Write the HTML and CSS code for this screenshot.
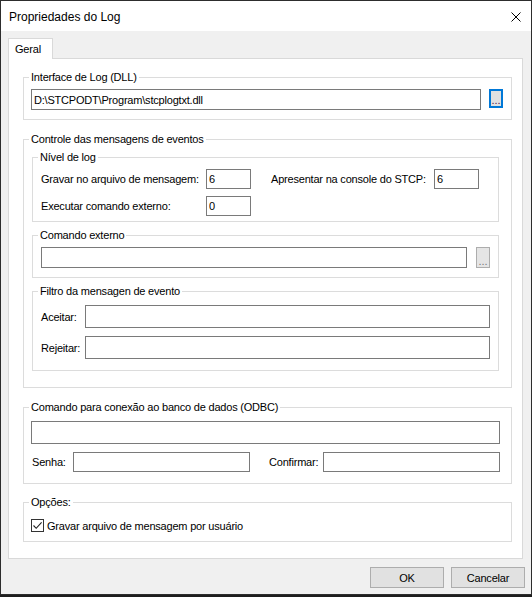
FILE: index.html
```html
<!DOCTYPE html>
<html lang="pt">
<head>
<meta charset="utf-8">
<title>Propriedades do Log</title>
<link rel="stylesheet" href="styles.css">
</head>
<body>
<div class="window">
  <div class="titlebar">
    <span class="title">Propriedades do Log</span>
    <svg class="close" width="10" height="10" viewBox="0 0 10 10"><path d="M0.5 0.5 L9.5 9.5 M9.5 0.5 L0.5 9.5" stroke="#000" stroke-width="1" fill="none"/></svg>
  </div>
  <div class="client">
    <div class="tabs"><div class="tab">Geral</div></div>
    <div class="panel">
      <fieldset class="group outer">
        <legend>Interface de Log (DLL)</legend>
        <div class="body-dll">
          <input class="field w-dll" type="text" value="D:\STCPODT\Program\stcplogtxt.dll">
          <button class="dots focused">...</button>
        </div>
      </fieldset>

      <fieldset class="group outer gap12">
        <legend>Controle das mensagens de eventos</legend>
        <div class="body-ctrl">
          <fieldset class="group inner">
            <legend>Nível de log</legend>
            <div class="body-nivel">
              <div class="row">
                <span class="lbl w165">Gravar no arquivo de mensagem:</span>
                <input class="field small" type="text" value="6">
                <span class="lbl w163 ml20">Apresentar na console do STCP:</span>
                <input class="field small" type="text" value="6">
              </div>
              <div class="row">
                <span class="lbl w165">Executar comando externo:</span>
                <input class="field small" type="text" value="0">
              </div>
            </div>
          </fieldset>

          <fieldset class="group inner gap6">
            <legend>Comando externo</legend>
            <div class="body-cmd">
              <input class="field w-cmd" type="text" value="">
              <button class="dots disabled">...</button>
            </div>
          </fieldset>

          <fieldset class="group inner gap6">
            <legend>Filtro da mensagen de evento</legend>
            <div class="body-filtro">
              <div class="row">
                <span class="lbl w44">Aceitar:</span>
                <input class="field w-filtro" type="text" value="">
              </div>
              <div class="row">
                <span class="lbl w44">Rejeitar:</span>
                <input class="field w-filtro" type="text" value="">
              </div>
            </div>
          </fieldset>
        </div>
      </fieldset>

      <fieldset class="group outer gap12">
        <legend>Comando para conexão ao banco de dados (ODBC)</legend>
        <div class="body-odbc">
          <input class="field w-odbc" type="text" value="">
          <div class="row">
            <span class="lbl w41 ml1">Senha:</span>
            <input class="field w-pass" type="password" value="">
            <span class="lbl w54 ml19">Confirmar:</span>
            <input class="field w-pass" type="password" value="">
          </div>
        </div>
      </fieldset>

      <fieldset class="group outer gap11">
        <legend>Opções:</legend>
        <div class="body-opt">
          <span class="check"><svg width="11" height="11" viewBox="0 0 11 11"><path d="M1.5 5.5 L4.2 8.3 L9.6 2.4" stroke="#202020" stroke-width="1.1" fill="none"/></svg></span>
          <span class="lbl">Gravar arquivo de mensagem por usuário</span>
        </div>
      </fieldset>
    </div>
    <div class="actions">
      <button class="btn">OK</button>
      <button class="btn">Cancelar</button>
    </div>
  </div>
</div>
</body>
</html>
```

FILE: styles.css
```css
* { box-sizing: border-box; }
html, body { margin: 0; padding: 0; }
body {
  width: 532px;
  height: 597px;
  overflow: hidden;
  background: #1e1e1e;
  font-family: "Liberation Sans", Arial, sans-serif;
  font-size: 11px;
  letter-spacing: -0.2px;
  color: #000;
}
.window {
  width: 532px;
  height: 595px;
  border: 1px solid #2d2d2d;
  background: #f0f0f0;
  display: flex;
  flex-direction: column;
}
.titlebar {
  height: 30px;
  flex: none;
  background: #fff;
  display: flex;
  align-items: center;
  justify-content: space-between;
  padding: 1px 10px 0 8px;
}
.title { font-size: 12px; letter-spacing: 0; }
.close { display: block; }
.client { flex: 1; display: flex; flex-direction: column; }
.tabs { display: flex; margin: 7px 0 0 7px; height: 20px; }
.tab {
  position: relative;
  z-index: 1;
  width: 45px;
  height: 21px;
  background: #fff;
  border: 1px solid #d9d9d9;
  border-bottom: none;
  padding: 3px 0 0 6px;
  line-height: 14px;
}
.panel {
  margin-left: 7px;
  width: 515px;
  height: 501px;
  background: #fff;
  border: 1px solid #d9d9d9;
  padding: 11px 0 0 14px;
}
.group {
  margin: 0;
  padding: 0;
  min-width: 0;
  border: 1px solid #dcdcdc;
}
.group legend {
  margin-left: 5px;
  padding: 0 2px;
  line-height: 14px;
  height: 14px;
}
.outer { width: 489px; }
.inner { width: 467px; }
.gap12 { margin-top: 12px; }
.gap11 { margin-top: 11px; }
.gap6 { margin-top: 6px; }

.field {
  display: block;
  margin: 0;
  height: 20px;
  border: 1px solid #7a7a7a;
  background: #fff;
  padding: 0 0 0 2px;
  font-family: "Liberation Sans", Arial, sans-serif;
  font-size: 11px;
  letter-spacing: -0.2px;
  color: #000;
  outline: none;
}
.w-dll { width: 450px; height: 21px; }
.small { width: 45px; }
.w-cmd { width: 426px; height: 21px; }
.w-filtro { width: 405px; height: 23px; }
.w-odbc { width: 469px; height: 23px; }
.w-pass { width: 177px; }

.row { display: flex; align-items: center; }
.lbl { display: block; white-space: nowrap; }
.w165 { width: 165px; }
.w163 { width: 163px; }
.w44 { width: 44px; }
.w41 { width: 41px; }
.w54 { width: 54px; }
.ml20 { margin-left: 20px; }
.ml19 { margin-left: 19px; }
.ml1 { margin-left: 1px; }

.dots {
  width: 14px;
  height: 19px;
  margin: 0;
  padding: 0 0 1px 0;
  display: flex;
  align-items: flex-end;
  justify-content: center;
  font-family: "Liberation Sans", Arial, sans-serif;
  font-size: 11px;
  letter-spacing: 0;
  line-height: 10px;
  background: #e1e1e1;
}
.dots.focused { border: 2px solid #0078d7; color: #4a1a4a; }
.dots.disabled { border: 1px solid #adadad; color: #7a7a7a; height: 21px; background: #e5e5e5; }

.body-dll { display: flex; align-items: flex-start; gap: 8px; padding: 5px 0 9px 7px; }
.body-ctrl { padding: 4px 12px 16px 8px; }
.body-nivel { display: flex; flex-direction: column; gap: 7px; padding: 5px 0 5px 8px; }
.body-cmd { display: flex; align-items: center; gap: 9px; padding: 5px 0 9px 8px; }
.body-filtro { display: flex; flex-direction: column; gap: 8px; padding: 7px 0 11px 8px; }
.body-odbc { display: flex; flex-direction: column; gap: 8px; padding: 7px 0 11px 7px; }
.body-opt { display: flex; align-items: center; padding: 10px 0 9px 7px; height: 32px; }
.check {
  width: 13px;
  height: 13px;
  border: 1px solid #333;
  background: #fff;
  margin-right: 3px;
  display: flex;
  align-items: center;
  justify-content: center;
}
.check svg { display: block; }

.actions {
  display: flex;
  justify-content: flex-end;
  gap: 7px;
  margin-top: 8px;
  padding-right: 6px;
}
.btn {
  width: 74px;
  height: 21px;
  margin: 0;
  padding: 0;
  background: #e1e1e1;
  border: 1px solid #adadad;
  font-family: "Liberation Sans", Arial, sans-serif;
  font-size: 11px;
  letter-spacing: -0.2px;
  color: #000;
}
```
